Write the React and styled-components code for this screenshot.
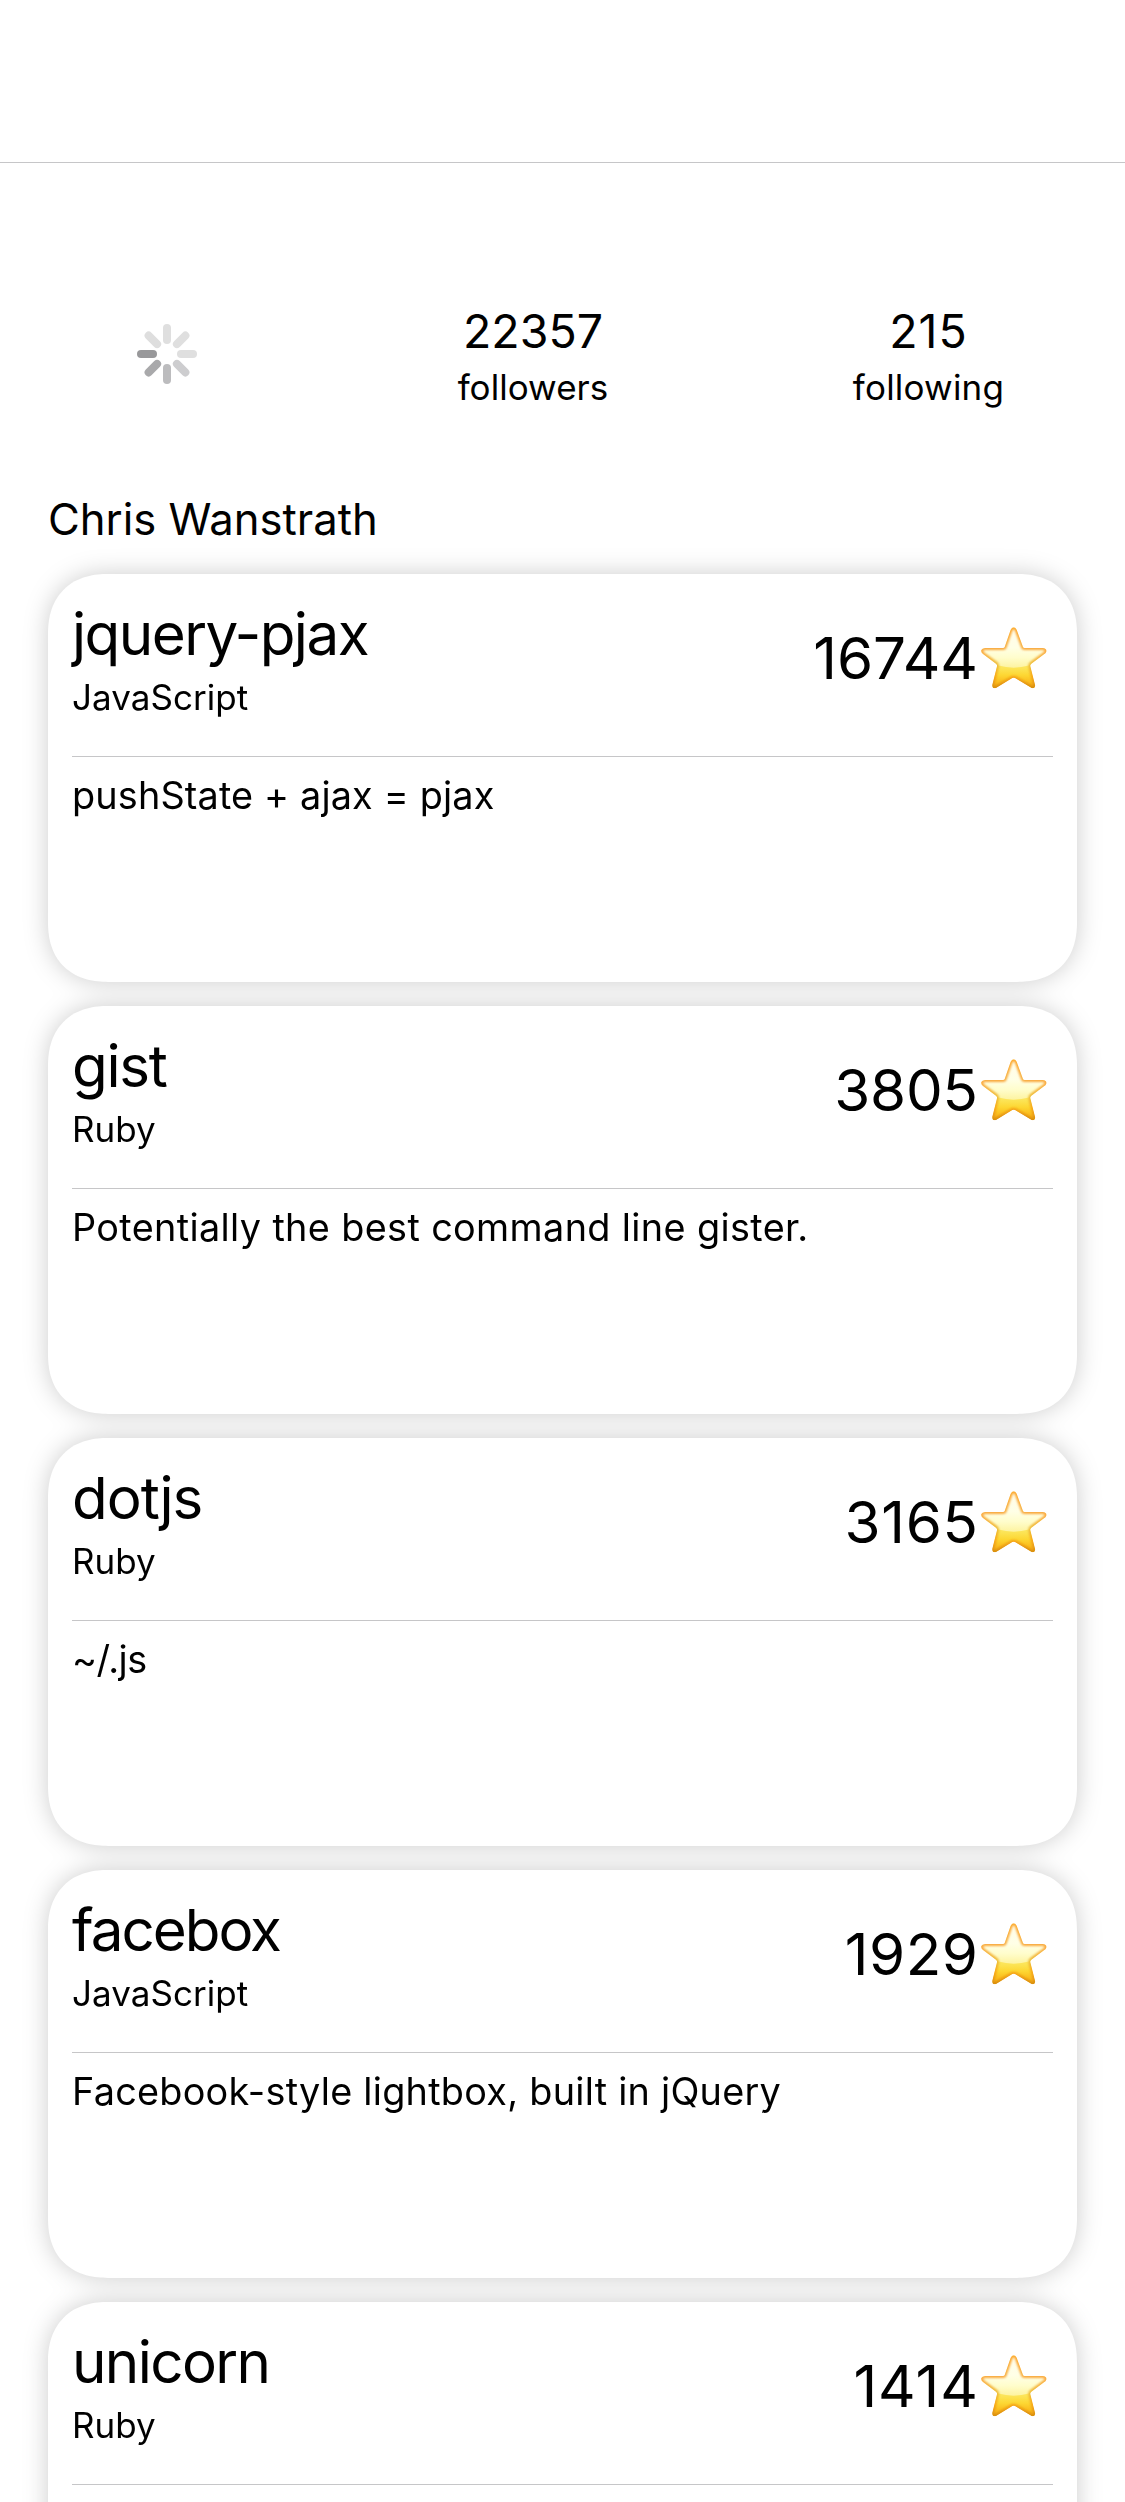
import React from 'react';
import styled, { createGlobalStyle } from 'styled-components';

const GlobalStyle = createGlobalStyle`
  * { box-sizing: border-box; }
  body {
    margin: 0;
    background: #fff;
    color: #000;
    font-family: Inter, "Liberation Sans", sans-serif;
  }
`;

const Screen = styled.main`
  width: 1125px;
  height: 2502px;
  overflow: hidden;
  display: flex;
  flex-direction: column;
  background: #fff;
`;

const NavBar = styled.header`
  flex: none;
  height: 163px;
  border-bottom: 1px solid #c6c6c8;
`;

const Profile = styled.section`
  flex: none;
  display: grid;
  grid-template-columns: 238px 494px 297px;
  padding: 140px 48px 0;
`;

const AvatarSlot = styled.div`
  display: flex;
  justify-content: center;
  padding-top: 21px;
`;

const Stat = styled.div`
  display: flex;
  flex-direction: column;
  align-items: center;
  gap: 6px;
`;

const StatValue = styled.span`
  font-size: 46.5px;
  line-height: 57px;
  letter-spacing: ${(p) => p.$tracking || 0}px;
`;

const StatLabel = styled.span`
  font-size: 35px;
  line-height: 43px;
  letter-spacing: ${(p) => p.$tracking || 0}px;
`;

const UserName = styled.h1`
  flex: none;
  margin: 84px 48px 27px;
  font-size: 43.6px;
  font-weight: 400;
  line-height: 54px;
`;

const RepoList = styled.section`
  flex: none;
  display: flex;
  flex-direction: column;
  gap: 24px;
  padding: 0 48px;
  filter: drop-shadow(0 0 12px rgba(0, 0, 0, 0.2));
`;

const Card = styled.article`
  height: 408px;
  padding: 24px;
  border-radius: 60px;
  corner-shape: superellipse(1.2);
  background: #fff;
`;

const CardHeader = styled.div`
  display: flex;
  justify-content: space-between;
  height: 159px;
  border-bottom: 1px solid #c6c6c8;
`;

const Titles = styled.div`
  display: flex;
  flex-direction: column;
  gap: 6px;
`;

const RepoName = styled.h2`
  margin: 0;
  font-size: 58.3px;
  font-weight: 400;
  line-height: 72px;
  letter-spacing: ${(p) => p.$tracking}px;
`;

const Language = styled.span`
  font-size: 35px;
  line-height: 43px;
  letter-spacing: 0.05px;
`;

const Stars = styled.div`
  display: flex;
  align-items: center;
  gap: 2px;
  height: 72px;
  margin-top: 24px;
  padding-right: 5px;
`;

const StarCount = styled.span`
  font-size: 58.3px;
  line-height: 72px;
  letter-spacing: ${(p) => p.$tracking || 0}px;
  margin-right: ${(p) => -(p.$tracking || 0)}px;
`;

const Description = styled.p`
  margin: 15px 0 0;
  font-size: 37.8px;
  line-height: 46px;
  white-space: nowrap;
  letter-spacing: ${(p) => p.$tracking}px;
`;

const STAR_PATH =
  'M152 89 Q161 75 170 89 L189 141 Q190 144 194 144 L248 144 Q262 146 259 155 Q257 160 252 163 L214 191 Q210 194 211 199 L225 254 Q227 267 215 264 L165 234 Q161 232 157 234 L108 264 Q96 268 97 254 L111 199 Q112 194 108 191 L70 163 Q62 157 64 150 Q66 145 75 144 L129 144 Q133 144 134 141 Z';

function StarIcon() {
  return (
    <svg width="68" height="64" viewBox="60 78 204 192" aria-hidden="true">
      <defs>
        <linearGradient id="starBase" gradientUnits="userSpaceOnUse" x1="0" y1="82" x2="0" y2="266">
          <stop offset="0.55" stopColor="#fcec78" />
          <stop offset="0.68" stopColor="#fce352" />
          <stop offset="0.78" stopColor="#fdd733" />
          <stop offset="0.88" stopColor="#fbbf20" />
          <stop offset="1" stopColor="#f59e12" />
        </linearGradient>
        <linearGradient id="starShine" gradientUnits="userSpaceOnUse" x1="0" y1="82" x2="0" y2="203">
          <stop offset="0" stopColor="#fffceb" />
          <stop offset="0.5" stopColor="#ffffe6" />
          <stop offset="0.75" stopColor="#fffdcc" />
          <stop offset="1" stopColor="#fdf3a0" />
        </linearGradient>
        <linearGradient id="starEdge" x1="0" y1="0" x2="0" y2="1">
          <stop offset="0" stopColor="#fda424" />
          <stop offset="0.3" stopColor="#f7ab3c" />
          <stop offset="0.4" stopColor="#fba53a" />
          <stop offset="0.62" stopColor="#ecbc38" />
          <stop offset="0.8" stopColor="#f9a516" />
          <stop offset="1" stopColor="#d68e10" />
        </linearGradient>
        <filter id="starSoft" x="-10%" y="-10%" width="120%" height="120%">
          <feGaussianBlur stdDeviation="3" />
        </filter>
        <clipPath id="starClip">
          <path d={STAR_PATH} />
        </clipPath>
      </defs>
      <g clipPath="url(#starClip)">
        <path d={STAR_PATH} fill="url(#starBase)" />
        <ellipse cx="161" cy="120" rx="118" ry="83" fill="url(#starShine)" />
        <path d={STAR_PATH} fill="none" stroke="url(#starEdge)" strokeWidth="12" filter="url(#starSoft)" />
      </g>
    </svg>
  );
}

const SPOKES = ['#dfdfdf', '#dfdfdf', '#dfdfdf', '#cdcdcf', '#bcbcbe', '#a9a9ab', '#98989a', '#dedede'];

function Spinner() {
  return (
    <svg width="60" height="60" viewBox="-30 -30 60 60" role="img" aria-label="Loading">
      {SPOKES.map((color, i) => (
        <rect key={i} x="-4" y="-30" width="8" height="20" rx="4" fill={color} transform={`rotate(${i * 45})`} />
      ))}
    </svg>
  );
}

const REPOS = [
  { name: 'jquery-pjax', nameTracking: -1.53, language: 'JavaScript', stars: '16744', text: 'pushState + ajax = pjax', textTracking: 0.16 },
  { name: 'gist', nameTracking: -1.3, language: 'Ruby', stars: '3805', starsTracking: -0.2, text: 'Potentially the best command line gister.', textTracking: 0.36 },
  { name: 'dotjs', nameTracking: -0.95, language: 'Ruby', stars: '3165', starsTracking: 0.7, text: '~/.js', textTracking: -0.5 },
  { name: 'facebox', nameTracking: -2, language: 'JavaScript', stars: '1929', starsTracking: 0.6, text: 'Facebook-style lightbox, built in jQuery', textTracking: 0.26 },
  { name: 'unicorn', nameTracking: -1.6, language: 'Ruby', stars: '1414', starsTracking: 1, text: '', textTracking: 0 },
];

function RepoCard({ repo }) {
  return (
    <Card>
      <CardHeader>
        <Titles>
          <RepoName $tracking={repo.nameTracking}>{repo.name}</RepoName>
          <Language>{repo.language}</Language>
        </Titles>
        <Stars>
          <StarCount $tracking={repo.starsTracking}>{repo.stars}</StarCount>
          <StarIcon />
        </Stars>
      </CardHeader>
      <Description $tracking={repo.textTracking}>{repo.text}</Description>
    </Card>
  );
}

export default function App() {
  return (
    <>
      <GlobalStyle />
      <Screen>
        <NavBar />
        <Profile>
          <AvatarSlot>
            <Spinner />
          </AvatarSlot>
          <Stat>
            <StatValue>22357</StatValue>
            <StatLabel $tracking={0.05}>followers</StatLabel>
          </Stat>
          <Stat>
            <StatValue $tracking={1}>215</StatValue>
            <StatLabel $tracking={0.2}>following</StatLabel>
          </Stat>
        </Profile>
        <UserName>Chris Wanstrath</UserName>
        <RepoList>
          {REPOS.map((repo) => (
            <RepoCard key={repo.name} repo={repo} />
          ))}
        </RepoList>
      </Screen>
    </>
  );
}
